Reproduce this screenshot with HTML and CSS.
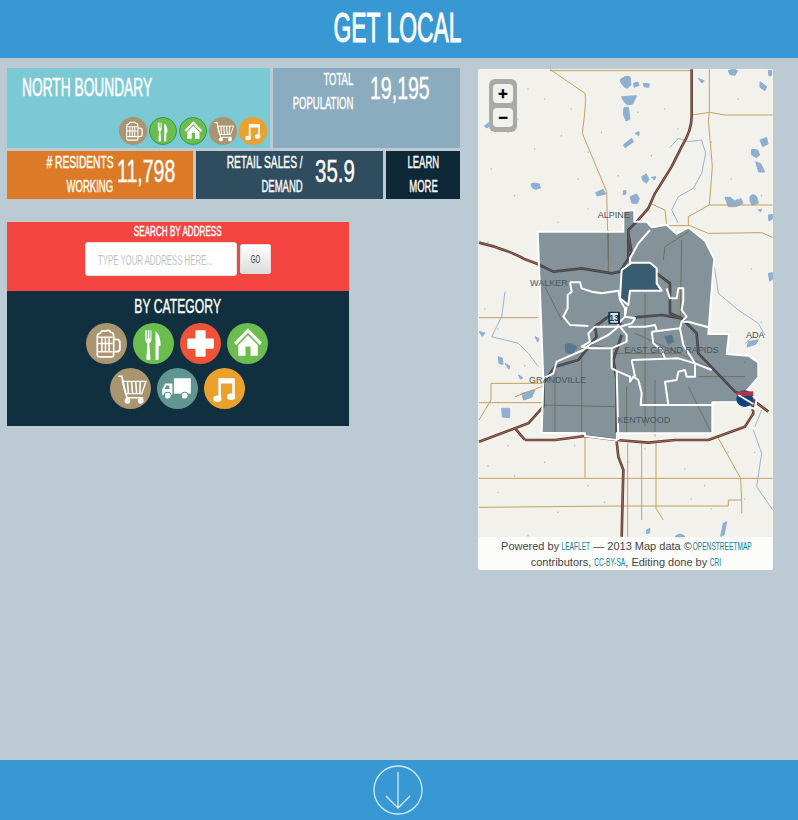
FILE: index.html
```html
<!DOCTYPE html>
<html lang="en">
<head>
  <meta charset="UTF-8" />
  <title>Get Local</title>
  <link rel="stylesheet" href="styles.css">
</head>
<body>
  <svg class="icon-defs" width="0" height="0" aria-hidden="true">
    <symbol id="i-beer" viewBox="0 0 40 40">
      <path d="M11 13q0-3 3-3q1-3 4.500-2q4-2 5.500 1q3 0 3 4v18q0 2-2 2H13q-2 0-2-2z" fill="none" stroke="#fff" stroke-width="1.6"/>
      <path d="M27 16h3q3 0 3 3v6q0 3-3 3h-3" fill="none" stroke="#fff" stroke-width="1.8"/>
      <path d="M11 14h15M11 20h15M11 28h15M15.500 14v14M19 14v14M22.500 14v14" stroke="#fff" stroke-width="1.5" fill="none"/>
    </symbol>
    <symbol id="i-food" viewBox="0 0 40 40">
      <path d="M12 7v9q0 3 2 4l-1 15q0 1 2 1t2-1l-1-15q2-1 2-4V7h-1v8h-1V7h-1.500v8h-1V7z" fill="#fff"/>
      <path d="M22 36V8q5 4 5 14l-2 1v12q0 1-1.500 1z" fill="#fff"/>
    </symbol>
    <symbol id="i-health" viewBox="0 0 40 40">
      <path d="M16 7h8q1 0 1 1v7h7q1 0 1 1v8q0 1-1 1h-7v7q0 1-1 1h-8q-1 0-1-1v-7H8q-1 0-1-1v-8q0-1 1-1h7V8q0-1 1-1z" fill="#fff"/>
    </symbol>
    <symbol id="i-house" viewBox="0 0 40 40">
      <path d="M20.500 5 34 19l-2 2.500-11.500-12L9 21.500 7 19z" fill="#fff"/>
      <path d="M20.500 12 30 21.500V32h-7V23h-5v9h-7V21.500z" fill="#fff"/>
    </symbol>
    <symbol id="i-cart" viewBox="0 0 40 40">
      <path d="M8 8h3.500l5 21h16" fill="none" stroke="#fff" stroke-width="1.600"/>
      <path d="M12 13h23l-4 12H15z" fill="none" stroke="#fff" stroke-width="1.300"/>
      <path d="M17 13l1 12M21 13l1 12M25 13l1 12M29.500 13l-.5 12" stroke="#fff" stroke-width="1.600"/>
      <circle cx="17" cy="32" r="2.800" fill="#fff"/>
      <circle cx="30" cy="32" r="2.800" fill="#fff"/>
    </symbol>
    <symbol id="i-truck" viewBox="0 0 40 40">
      <path d="M16.500 10H33v15H16.500z" fill="#fff"/>
      <path d="M15 15v11H5v-5l3-6z" fill="#fff"/>
      <path d="M9 17h3v3.500H7.500z" fill="#619590"/>
      <circle cx="10.500" cy="27" r="3.300" fill="#fff" stroke="#619590"/>
      <circle cx="27" cy="27" r="3.300" fill="#fff" stroke="#619590"/>
    </symbol>
    <symbol id="i-music" viewBox="0 0 40 40">
      <path d="M14 10h16v18h-2.500V15H16.500v15H14z" fill="#fff"/>
      <ellipse cx="13" cy="30" rx="4" ry="3.200" fill="#fff"/>
      <ellipse cx="26.500" cy="28" rx="4" ry="3.200" fill="#fff"/>
    </symbol>
  </svg>

  <header class="top-bar">
    <h1><span>Get Local</span></h1>
  </header>

  <main class="content">
    <div class="left-col">
      <div class="stat-row">
        <section class="tile tile-name">
          <h2>North Boundary</h2>
          <div class="mini-icons">
            <span class="cat mini tan"><svg><use href="#i-beer"/></svg></span>
            <span class="cat mini green"><svg><use href="#i-food"/></svg></span>
            <span class="cat mini green"><svg><use href="#i-house"/></svg></span>
            <span class="cat mini tan"><svg><use href="#i-cart"/></svg></span>
            <span class="cat mini orange"><svg><use href="#i-music"/></svg></span>
          </div>
        </section>
        <section class="tile tile-pop">
          <p class="label"><span>Total</span><span>Population</span></p>
          <p class="num">19,195</p>
        </section>
      </div>
      <div class="stat-row">
        <section class="tile tile-work">
          <p class="label"><span class="wide"># Residents</span><span>Working</span></p>
          <p class="num">11,798</p>
        </section>
        <section class="tile tile-retail">
          <p class="label"><span class="wide">Retail Sales /</span><span>Demand</span></p>
          <p class="num">35.9</p>
        </section>
        <a class="tile tile-more" href="#"><span>Learn</span><span>More</span></a>
      </div>

      <div class="finder">
        <form class="search-box">
          <h3><span>Search by Address</span></h3>
          <div class="search-row">
            <div class="address-box">
              <input type="text" placeholder="TYPE YOUR ADDRESS HERE...">
            </div>
            <button type="button"><span>Go</span></button>
          </div>
        </form>
        <section class="cat-box">
          <h3><span>By Category</span></h3>
          <div class="cat-row">
            <span class="cat tan"><svg><use href="#i-beer"/></svg></span>
            <span class="cat green"><svg><use href="#i-food"/></svg></span>
            <span class="cat red"><svg><use href="#i-health"/></svg></span>
            <span class="cat green"><svg><use href="#i-house"/></svg></span>
          </div>
          <div class="cat-row">
            <span class="cat tan"><svg><use href="#i-cart"/></svg></span>
            <span class="cat teal"><svg><use href="#i-truck"/></svg></span>
            <span class="cat orange"><svg><use href="#i-music"/></svg></span>
          </div>
        </section>
      </div>
    </div>

    <div class="map">
      <svg class="map-art" viewBox="0 0 885 1503" aria-hidden="true">
        <defs>
          <g id="hw-lines">
            <g transform="translate(-9 -27)">
              <path d="M650 28V170q0 40-30 90l-30 60-50 80-20 45-35 40-25 25v90"/>
            </g>
            <g transform="translate(-9 453)">
              <path d="M12 68q78 17 138 50l38 14 47 23 85-10 90 15 25-5 35-55-10-60"/>
              <path d="M545 160l40 30v90l35 15 45 45 5 60 110 115 60 30 40 30"/>
              <path d="M480 292l80-7 60 10M440 315l-40-25-40 30 5 30-55 70-70 20-35 50v70l-45 50-40 15 30 35"/>
              <path d="M440 345l-25 75 10 60v180M12 665l108-40"/>
              <path d="M150 660h90l90-12 95 12 95 8 80-8h100l110-40 25-40-5-40"/>
            </g>
            <g transform="translate(-9 1083)">
              <path d="M425 35l5 45 15 40-5 200"/>
            </g>
          </g>
        </defs>

        <rect width="885" height="1503" fill="#f3f1ec"/>
        <!-- specks -->
        <path class="specks" d="M60 60h0M120 150h0M200 90h0M40 300h0M110 380h0M300 330h0M330 250h0M250 200h0M420 320h0M480 130h0M560 120h0M780 90h0M820 250h0M760 330h0M850 380h0M30 520h0M120 560h0M240 460h0M330 420h0M60 1000h0M90 1130h0M200 1180h0M330 1250h0M380 1300h0M620 1200h0M680 1250h0M750 1150h0M830 1150h0M60 1270h0M240 1330h0M500 1140h0M150 1400h0M700 1320h0M820 600h0M850 760h0M800 880h0M20 720h0M60 780h0M140 890h0M520 260h0M600 180h0M700 220h0M170 240h0M90 190h0M150 60h0M280 120h0M370 190h0M640 1290h0M450 1180h0M290 1130h0M110 1220h0M30 1190h0M800 1290h0M860 1010h0"/>

        <!-- lakes up north -->
        <g class="water" transform="translate(-9 -27)">
          <path d="M435 60q15-15 30-10l3 25-12 10q-15-5-21-25zM475 70l14-4 3 10-14 6zM505 70l18 2-2 10-14-2zM440 110l45-3-12 25-15 3q-15-10-18-25zM447 142h13l5 35-12 6-8-20zM760 32q15-8 28 0l-8 14-15-2zM880 32l10 0 0 14-8 2zM855 65l20 15-5 12-15-10zM670 55l18 8-8 6zM445 255l25-20 6 10-26 18zM480 220l12-5 0 12zM168 372q10-6 25 0l3 12-15 4q-12-2-13-16zM362 398l22-10 8 14-26 6zM445 392l8 0 0 10-8 2zM465 410l20-8 8 14-6 14-16 0zM500 350l14-8 8 16-8 12-10-8zM530 352l12-2-4 10zM28 198l28-20-4 12-16 14zM830 268l18 2 6 15-10 8-14-8zM855 240l20-8 4 20-16 8zM842 305l15 6 12 25-18 0zM750 412l16 0 12 10 20-6 6 14-20 10-24 0zM825 410q8-12 20 0l5 20-18 6q-10-10-7-26zM880 465l12-2 0 14-10 6zM850 450l10-3-3 8z"/>
          <path class="river" d="M585 262l25-27 30 10 40-5 12 40-12 60-25 45-45 25-20 40 20 40"/>
        </g>

        <!-- lakes and rivers in the metro part -->
        <g class="water" transform="translate(-9 453)">
          <path class="river" d="M90 215l-10 75-30 60 80 20 30 30 30 40"/>
          <path class="river" d="M718 140l12 80 60 50 60 40 20 35M835 350l-25 20M860 570l-20 50"/>
          <path d="M70 410l12 4 2 20-12-4zM90 430l14 8-2 10zM130 465l14 8-8 4zM180 350l12 6-4 10zM12 335l18 4-8 10zM80 565h24v28l-22-2zM140 520l40-10-10 22-24 8zM880 160l12-2 0 20-8 6zM820 365l30-6-8 14-26 8zM270 375q18-10 35 5l-12 22-20-5zM570 350l20-5 6 20-16 8z"/>
        </g>

        <!-- main roads -->
        <g class="road" transform="translate(-9 -27)">
          <path d="M225 28 330 100q5 20-8 120l73 175 5 205M225 32H650M703 28V160l-3 20 12 140-9 115-63 35v30M650 165l55-8 45 8H893M703 435H893M525 430l45 20 5 47h65M640 495l60 25 160-2 33 14"/>
        </g>
        <g class="road" transform="translate(-9 453)">
          <path d="M12 293H188M48 490H205M48 490v50L12 600M12 548H205M120 530l80-30M400 30V160M620 60l-5 270M640 35 570 80l-5 40M210 200l50 100M320 400v250M240 440v200M205 555l215 5M410 400H620M510 220v400M540 480v170M455 500v140M640 500l70 140M670 470H810M330 370l100 20M480 340 700 440"/>
        </g>
        <g class="road" transform="translate(-9 1083)">
          <path d="M12 145H893M12 232l418-4H760v-18h40M500 40V270M458 40V320M543 40V235l22 35M330 20V143M730 25l67 120 3 65v40"/>
        </g>

        <!-- highways, dark casing then lighter core -->
        <g class="hw-case"><use href="#hw-lines"/></g>
        <g class="hw-core"><use href="#hw-lines"/></g>

        <g class="water" transform="translate(-9 1083)">
          <path class="river" d="M835 0l25 70-15 100 48 70"/>
          <path d="M745 280l10-5-8 40-10 4zM600 320q15-15 30 0l-15 6zM515 300l10-5-2 14-8 2z"/>
        </g>

        <!-- boundary polygons -->
        <g transform="translate(-9 453)">
          <path class="zone" d="M188 35H445V-27l33-3V5h37l15 17 45-8 30 28 35-20 50 40 28 55-3 28-15 197h62l-7 60 65 5 30 20v45l-35 40 30 25-5 30-55-20h-73V640H425v20l-95-12v-8l-130-2 5-158z"/>
          <path class="zone-dark" d="M470 128h55l20 17v45l15 22h-95l-5 43-25-20 5-85z"/>
          <g class="zone-lines">
            <path d="M525 30 490 70l-25 45v13M575 205l10 30h20l5-30h15v37l-5 28 15 20-15 15h20l60 17"/>
            <path d="M285 187h30l5 18 30 10 30 5 50-8 5 28 15 25v25l-20 20v10h-70l-20 20 5 25-25 15 30 5h60M285 187l5 28-12 10v40l-13 25 20 25 55 3"/>
            <path d="M430 320l-30 25-50 25-25 20-80 35-10 35-30 15"/>
            <path d="M455 260l-5 30 30 5-10 15-35 10 20 25v20l-45 20v60l20 10 35 15v15l10-15 15 10 10 40-3 35H712M425 450l5 210"/>
            <path d="M470 420l10 50M470 420l140-5 50 15v40h-25l-5-20-20 5-5 25-35 5 10 70M660 430l50 20"/>
            <path d="M530 335l85-10 10 50 35 55M530 335l5 35 25 20 10 25M460 320h50l30-5 5 15M620 305l-5 20"/>
          </g>
          <!-- highway shields -->
          <rect x="400" y="275" width="35" height="37" rx="3" fill="#14344f"/>
          <rect x="406" y="279" width="23" height="29" fill="#dfe6ea"/>
          <text class="shield-text" x="417" y="303">13</text>
          <circle cx="809" cy="536" r="25" fill="#11407e"/>
          <path d="M785 514h50v14h-50z" fill="#a8394a"/>
          <path d="M790 525 835 552" stroke="#fff" stroke-width="6"/>
        </g>

        <!-- place names -->
        <g class="place" transform="translate(-9 453)">
          <text x="165" y="197">WALKER</text>
          <text x="448" y="398">EAST GRAND RAPIDS</text>
          <text x="162" y="490">GRANDVILLE</text>
          <text x="427" y="610">KENTWOOD</text>
          <text x="813" y="355">ADA</text>
          <text x="368" y="-7">ALPINE</text>
        </g>
      </svg>

      <div class="zoom-box">
        <button type="button">+</button>
        <button type="button">&minus;</button>
      </div>

      <p class="attribution">
        Powered by <a class="l-leaflet" href="#"><span>Leaflet</span></a> &mdash; 2013 Map data &copy; <a class="l-osm" href="#"><span>OpenStreetMap</span></a><br>
        contributors, <a class="l-cc" href="#"><span>CC-BY-SA</span></a>, Editing done by <a class="l-cri" href="#"><span>CRI</span></a>
      </p>
    </div>
  </main>

  <footer class="bottom-bar">
    <svg class="arrow" width="50" height="50" viewBox="0 0 50 50">
      <circle cx="25" cy="25" r="24" fill="none" stroke="#cfeefa" stroke-width="1.300"/>
      <path d="M25 7V43M13 31 25 43 37 31" fill="none" stroke="#cfeefa" stroke-width="1.300"/>
    </svg>
  </footer>
</body>
</html>
```

FILE: styles.css
```css
/* no condensed font on the box, so the all-caps text is squeezed with scaleX */
:root {
  --blue: #3898d3;
  --page: #bccad4;
  --font: "Liberation Sans", sans-serif;
}
* {
  box-sizing: border-box;
}
body {
  margin: 0;
  min-height: 820px;
  display: flex;
  flex-direction: column;
  background-color: var(--page);
  color: #fff;
  font-family: var(--font);
  text-transform: uppercase;
  -webkit-text-stroke: 0.4px #fff;
}
.icon-defs {
  position: absolute;
}
h1, h2, h3, p {
  margin: 0;
  font-weight: normal;
}
.top-bar {
  height: 58px;
  background-color: var(--blue);
  text-align: center;
  padding-right: 3px;
}
.top-bar h1 {
  font-size: 42px;
  line-height: 56px;
  -webkit-text-stroke: 1px #fff;
}
.top-bar h1 span {
  display: inline-block;
  transform: scaleX(0.545);
}
.content {
  flex: 1;
  display: flex;
  align-items: flex-start;
  padding: 10px 7px 0;
}
.left-col {
  flex: none;
  width: 453px;
}
.stat-row {
  display: flex;
  gap: 3px;
  margin-bottom: 3px;
}
.tile {
  display: flex;
  color: #fff;
  text-decoration: none;
}
.label {
  flex: none;
  display: flex;
  flex-direction: column;
  align-items: flex-end;
  font-size: 17px;
  line-height: 24px;
}
.label span {
  flex: none;
  white-space: nowrap;
  transform: scaleX(0.56);
  transform-origin: right center;
}
.label .wide {
  transform: scaleX(0.6);
}
.num {
  flex: none;
  width: 60px;
  font-size: 31px;
  line-height: 42px;
  white-space: nowrap;
  transform: scaleX(0.63);
  transform-origin: left center;
}
.tile-name {
  position: relative;
  width: 263px;
  height: 80px;
  background-color: #7bc9d4;
  padding: 5px 15px;
}
.tile-name h2 {
  font-size: 25px;
  line-height: 28px;
  white-space: nowrap;
  transform: scaleX(0.55);
  transform-origin: left center;
  -webkit-text-stroke: 0.6px #fff;
}
.mini-icons {
  position: absolute;
  right: 3px;
  bottom: 3px;
  display: flex;
  gap: 2px;
}
.tile-pop {
  width: 187px;
  background-color: #8aacbe;
}
.tile-pop .label {
  width: 80px;
}
.tile-pop .num {
  margin-left: 17px;
}
.tile-work, .tile-retail {
  height: 48px;
}
.tile-work {
  width: 186px;
  background-color: #dd7a27;
}
.tile-work .label {
  width: 106px;
}
.tile-work .num {
  margin-left: 4px;
}
.tile-retail {
  width: 187px;
  background-color: #2f4d5e;
}
.tile-retail .label {
  width: 107px;
}
.tile-retail .num {
  margin-left: 12px;
  transform: scaleX(0.66);
}
.tile-more {
  width: 74px;
  flex-direction: column;
  align-items: center;
  background-color: #0f2838;
  font-size: 17px;
  line-height: 24px;
}
.tile-more span {
  flex: none;
  transform: scaleX(0.56);
}
.finder {
  width: 342px;
  margin-top: 23px;
}
.search-box {
  height: 69px;
  background-color: #f44540;
  text-align: center;
  padding-top: 2px;
}
.search-box h3 {
  font-size: 14px;
  line-height: 15px;
}
.search-box h3 span,
.cat-box h3 span {
  display: inline-block;
  transform: scaleX(0.58);
}
.search-row {
  display: flex;
  justify-content: center;
  align-items: center;
  gap: 3px;
  margin-top: 3px;
}
.address-box {
  width: 152px;
  height: 34px;
  border: 1px solid #e6e6e6;
  border-radius: 3px;
  background-color: #fff;
  padding-left: 12px;
}
.address-box input {
  display: block;
  width: 250px;
  height: 32px;
  padding: 0;
  border: none;
  outline: none;
  background: transparent;
  font-family: var(--font);
  font-size: 15px;
  transform: scaleX(0.52);
  transform-origin: left center;
}
.address-box input::placeholder {
  color: #a5a5a5;
}
.search-row button {
  width: 31px;
  height: 30px;
  padding: 0;
  border: 1px solid #ddd;
  border-radius: 2px;
  background: linear-gradient(#fff, #dcdcdc);
  color: #333;
  font-family: var(--font);
  font-size: 11px;
  text-transform: uppercase;
  -webkit-text-stroke: 0;
}
.search-row button span {
  display: inline-block;
  transform: scaleX(0.55);
}
.cat-box {
  height: 135px;
  background-color: #10303f;
  text-align: center;
  padding-top: 3px;
}
.cat-box h3 {
  font-size: 21px;
  line-height: 24px;
  margin-bottom: 5px;
}
.cat-row {
  display: flex;
  justify-content: center;
  gap: 6px;
  margin-bottom: 4px;
  padding-right: 2px;
}
.cat {
  display: block;
  width: 41px;
  height: 41px;
  border-radius: 50%;
}
.cat svg {
  display: block;
  width: 100%;
  height: 100%;
}
.cat.mini {
  width: 28px;
  height: 28px;
}
.mini.green {
  border: 1px solid #2f9e48;
}
.tan { background-color: #ab9470; }
.green { background-color: #6bbd50; }
.red { background-color: #ee5237; }
.teal { background-color: #619590; }
.orange { background-color: #eda12d; }

.map {
  position: relative;
  flex: none;
  width: 295px;
  height: 501px;
  margin: 1px 0 0 18px;
  border-radius: 3px;
  overflow: hidden;
  background-color: #f3f1ec;
  -webkit-text-stroke: 0;
}
.map-art {
  display: block;
  width: 295px;
  height: 501px;
}
.specks {
  fill: none;
  stroke: #b7c2c9;
  stroke-width: 5;
  stroke-linecap: round;
}
.water {
  fill: #8fafd2;
  stroke: #8fafd2;
  stroke-width: 3;
  stroke-linejoin: round;
}
.water .river {
  fill: none;
  stroke: #9ab5d0;
}
.road path {
  fill: none;
  stroke: #c4a25e;
  stroke-width: 3;
}
.hw-case, .hw-core {
  fill: none;
  stroke-linejoin: round;
}
.hw-case {
  stroke: #5e3d30;
  stroke-width: 8;
}
.hw-core {
  stroke: #a96f5f;
  stroke-width: 2.500;
}
.zone {
  fill: #2d4a5a;
  fill-opacity: 0.56;
  stroke: #fff;
  stroke-width: 6;
  stroke-linejoin: round;
}
.zone-dark {
  fill: #1f4a62;
  fill-opacity: 0.75;
  stroke: #fff;
  stroke-width: 6;
  stroke-linejoin: round;
}
.zone-lines path {
  fill: none;
  stroke: #fff;
  stroke-width: 6;
  stroke-linejoin: round;
}
.shield-text {
  font-family: var(--font);
  font-size: 26px;
  font-weight: bold;
  fill: #14344f;
  text-anchor: middle;
}
.place text {
  font-family: var(--font);
  font-size: 27px;
  fill: #4a5560;
}
.zoom-box {
  position: absolute;
  left: 11px;
  top: 10px;
  width: 28px;
  height: 53px;
  padding: 5px 4px;
  display: flex;
  flex-direction: column;
  gap: 5px;
  background-color: #a9a9a6;
  border-radius: 6px;
}
.zoom-box button {
  width: 20px;
  height: 19px;
  padding: 0;
  border: none;
  border-radius: 4px;
  background-color: #f1f1ef;
  color: #000;
  font-family: var(--font);
  font-size: 16px;
  font-weight: bold;
  line-height: 18px;
  -webkit-text-stroke: 0.5px #000;
}
.attribution {
  position: absolute;
  left: 0;
  right: 0;
  bottom: 0;
  height: 33px;
  padding-top: 1px;
  background-color: rgba(255, 255, 255, 0.75);
  color: #444;
  font-size: 11px;
  line-height: 16px;
  text-align: center;
  text-transform: none;
  white-space: nowrap;
}
.attribution a {
  display: inline-flex;
  justify-content: center;
  color: #0d7fa0;
  font-size: 11px;
  text-decoration: none;
  text-transform: uppercase;
}
.attribution a span {
  flex: none;
  transform: scaleX(0.6);
}
.l-leaflet { width: 28px; }
.l-osm { width: 55px; }
.l-cc { width: 31px; }
.l-cri { width: 10px; }
.bottom-bar {
  height: 60px;
  background-color: var(--blue);
  display: flex;
  justify-content: center;
  align-items: center;
}
.arrow {
  margin-right: 2px;
}
```
